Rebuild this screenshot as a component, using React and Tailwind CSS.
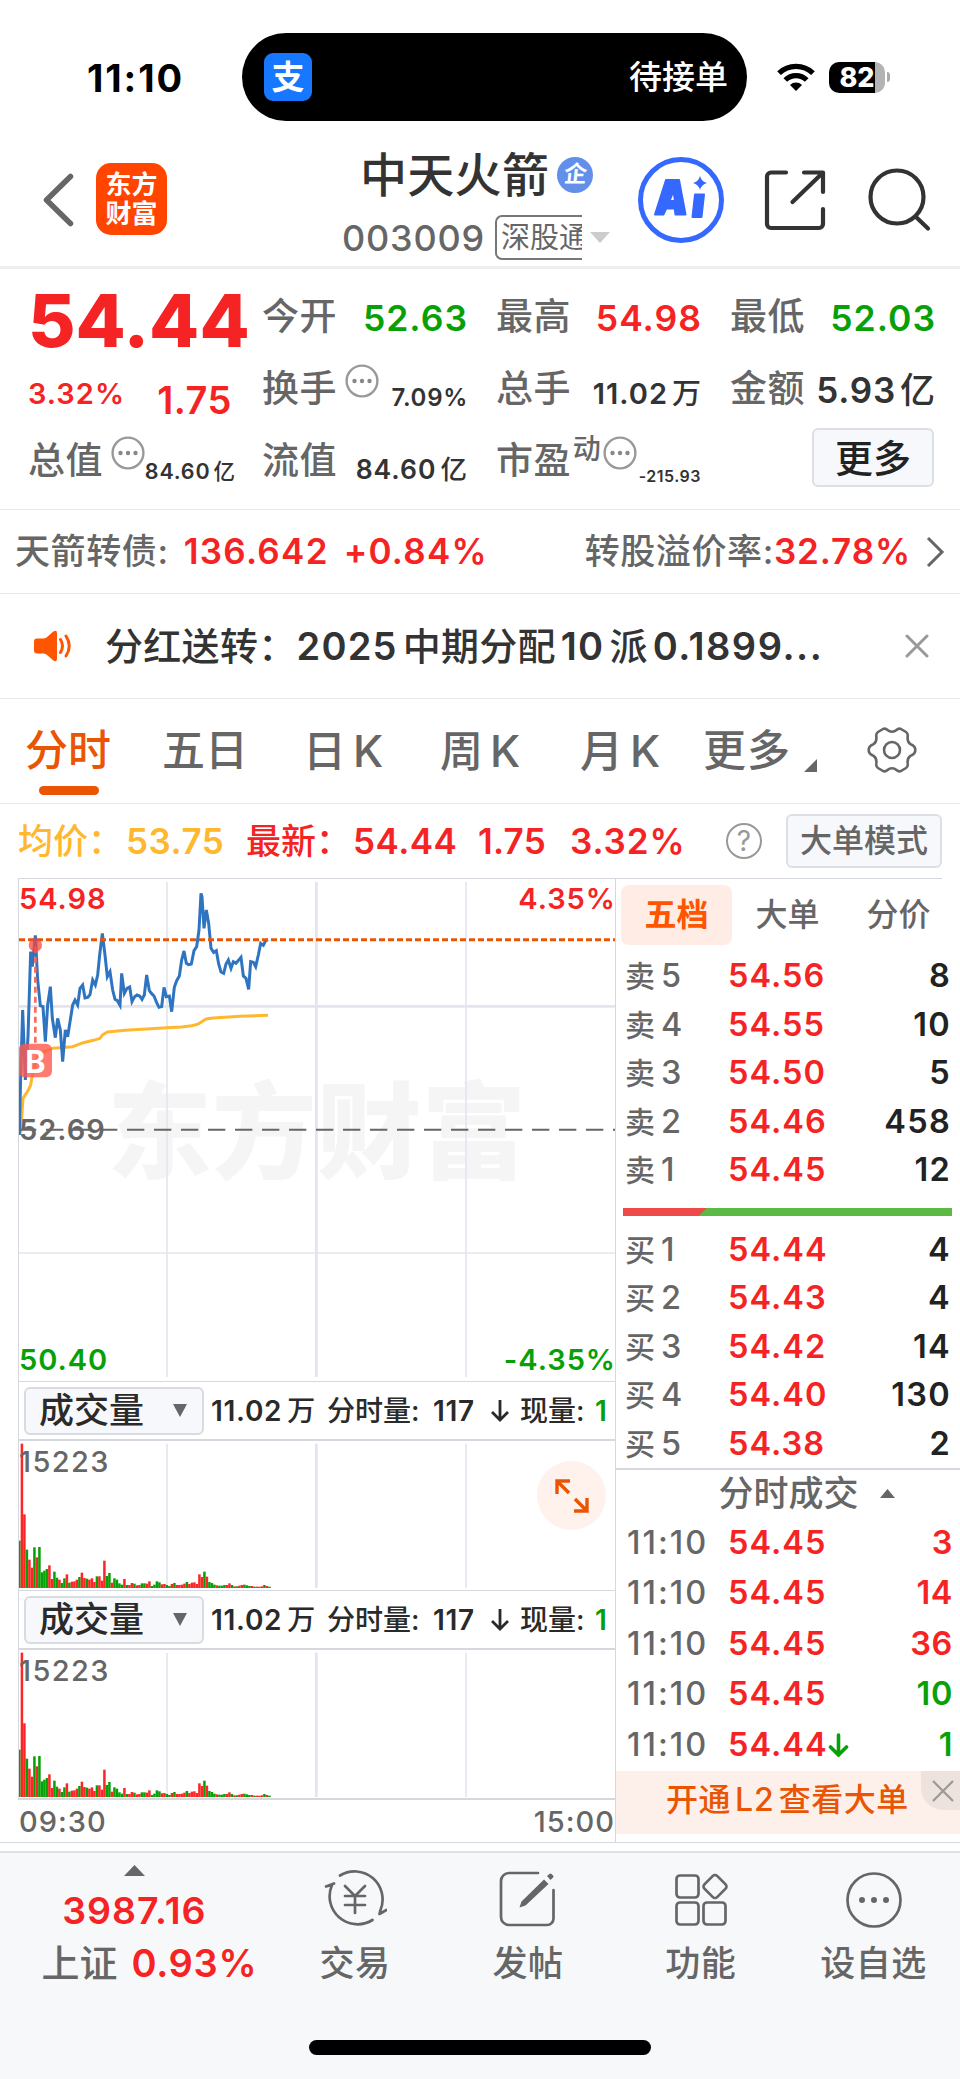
import clsx from "clsx";

const RED = "text-[#f52323]";
const GREEN = "text-[#07a007]";
const DARK = "text-[#333]";
const GRAY = "text-[#666]";

const asks = [
    { label: "卖5", price: "54.56", qty: "8" },
    { label: "卖4", price: "54.55", qty: "10" },
    { label: "卖3", price: "54.50", qty: "5" },
    { label: "卖2", price: "54.46", qty: "458" },
    { label: "卖1", price: "54.45", qty: "12" }
];

const bids = [
    { label: "买1", price: "54.44", qty: "4" },
    { label: "买2", price: "54.43", qty: "4" },
    { label: "买3", price: "54.42", qty: "14" },
    { label: "买4", price: "54.40", qty: "130" },
    { label: "买5", price: "54.38", qty: "2" }
];

const trades = [
    { price: "54.45", qty: "3", up: true },
    { price: "54.45", qty: "14", up: true },
    { price: "54.45", qty: "36", up: true },
    { price: "54.45", qty: "10", up: false },
    { price: "54.44", qty: "1", up: false, arrow: true }
];

// one bar per minute: r = up, g = down
const volumes = (
    "g142 r433 r221 g115 r85 r61 g122 r92 g123 g47 g52 g57 r68 r27 g49 g31 r25 g15 g29 r41 " +
    "g16 r19 r20 r25 g33 r46 r30 g28 r25 r29 r18 g35 r35 r22 r82 g36 g45 r16 g29 g25 " +
    "g14 g10 r27 g9 r9 r15 g13 r8 r9 g14 g14 r13 r20 g6 g10 g20 g17 r11 r12 g9 " +
    "g6 r12 g15 r9 r9 r10 r13 g18 r12 r16 r17 r12 r41 r33 g49 r34 g18 g15 g10 r8 " +
    "g7 g7 g9 r9 r14 g9 r5 g5 r7 r9 g10 g8 g6 r6 g4 r4 r4 r5 g9 r6 g4"
).split(" ").map((s) => ({ up: s[0] === "r", h: Number(s.slice(1)) }));

const priceLine =
    "58,795 62,620 68,420 76,630 84,500 92,245 97,290 106,196 113,330 121,407 129,410 136,515 143,405 151,350 " +
    "157,445 166,503 173,445 181,480 188,575 196,480 203,500 218,405 225,390 233,405 240,355 248,345 255,384 263,382 " +
    "270,374 278,330 286,345 293,315 299,255 307,190 315,255 322,320 330,305 338,360 345,388 352,392 360,406 365,310 373,370 " +
    "381,355 389,351 396,395 404,380 411,375 419,378 426,388 433,375 440,315 448,362 455,371 462,378 470,398 477,412 485,410 " +
    "492,352 499,380 508,378 515,425 523,352 530,332 538,318 545,270 552,243 559,280 566,284 574,282 582,242 590,230 " +
    "597,180 603,70 606,80 612,175 619,120 626,160 633,235 641,247 649,242 656,282 663,306 671,310 678,282 685,270 " +
    "693,295 700,275 708,280 723,262 730,318 738,325 746,358 752,275 760,277 767,290 775,255 782,220 790,226 797,212 804,209";

const avgLine =
    "62,790 69,685 85,660 92,645 98,610 106,580 113,560 125,548 158,535 218,530 250,518 280,511 300,505 307,495 " +
    "322,486 375,481 440,477 500,473 545,471 575,467 593,463 605,455 618,447 640,444 720,439 804,436";

function MoreDots({ className }) {
    return (
        <svg className={clsx("h-[34px] w-[34px] shrink-0", className)} viewBox="0 0 34 34" fill="none">
            <circle cx="17" cy="17" r="15.4" stroke="#999" strokeWidth="2.4" />
            <circle cx="9.5" cy="17" r="2.2" fill="#888" />
            <circle cx="17" cy="17" r="2.2" fill="#888" />
            <circle cx="24.5" cy="17" r="2.2" fill="#888" />
        </svg>
    );
}

function StatusBar() {
    return (
        <div className="flex h-[145px] items-start pt-[33px]">
            <div className="flex h-[88px] w-[242px] items-center pt-px pl-[87px] text-[38px] font-bold tracking-[1.9px] text-black">11:10</div>
            <div className="flex h-[88px] w-[505px] items-center justify-between rounded-full bg-black pr-[19px] pl-[22px]">
                <div className="flex h-12 w-12 items-center justify-center rounded-[9px] bg-[#1677ff]">
                    <span className="text-[33px] font-bold text-white">支</span>
                </div>
                <span className="text-[33px] font-medium text-white">待接单</span>
            </div>
            <div className="flex h-[88px] items-center pl-[30px]">
                <svg className="h-[28px] w-[38px]" viewBox="0 0 38 28" fill="none" stroke="#000" strokeWidth="5.2">
                    <path d="M2 10.2a24.5 24.5 0 0 1 34 0" />
                    <path d="M8.3 17a15.2 15.2 0 0 1 21.4 0" />
                    <path d="M13 22a8.5 8.5 0 0 1 12 0l-6 6z" fill="#000" stroke="none" />
                </svg>
                <div className="ml-[14px] flex h-[31px] w-[56px] items-center justify-center overflow-hidden rounded-[10px] bg-[linear-gradient(90deg,#000_46px,#b3b3b3_46px)]">
                    <span className="text-[27px] font-extrabold text-white">82</span>
                </div>
                <div className="ml-[2px] h-[10px] w-[3px] rounded-r-full bg-[#aaa]" />
            </div>
        </div>
    );
}

function Header() {
    return (
        <div className="flex h-[124px] border-b-[3px] border-[#eee]">
            <svg className="mt-[27px] ml-[42px] h-[56px] w-[34px]" viewBox="0 0 34 56" fill="none" stroke="#666" strokeWidth="5.5" strokeLinecap="round" strokeLinejoin="round">
                <path d="M28.5 4.5L4.5 28l24 23.5" />
            </svg>
            <div className="mt-[18px] ml-5 flex h-[72px] w-[71px] flex-col items-center justify-center gap-[3px] rounded-[15px] bg-[#ff4500] text-[26px] font-bold text-white">
                <span>东方</span>
                <span>财富</span>
            </div>
            <div className="ml-[175px] w-[274px]">
                <div className="mt-[6px] flex items-center pl-[18px]">
                    <span className="text-[47px] font-medium tracking-[0.3px] text-[#333]">中天火箭</span>
                    <div className="ml-2 flex h-9 w-9 items-center justify-center rounded-full bg-[#628fea] text-[23px] font-bold text-white">
                        <span className="-skew-x-6">企</span>
                    </div>
                </div>
                <div className="mt-[17px] flex items-center">
                    <span className="text-[36px] font-medium tracking-[0.8px] text-[#666]">003009</span>
                    <div className="ml-[10px] flex h-[45px] w-[87px] items-center overflow-hidden rounded-l-[7px] border-2 border-r-0 border-[#777] pl-1 text-[29px] whitespace-nowrap text-[#666]">
                        深股通
                    </div>
                    <svg className="ml-2 h-[11px] w-5" viewBox="0 0 20 11">
                        <path d="M0 0h20L10 11z" fill="#ccc" />
                    </svg>
                </div>
            </div>
            <svg className="mt-[11px] ml-[22px] h-[88px] w-[88px]" viewBox="0 0 88 88" fill="none">
                <circle cx="43" cy="44" r="40.5" stroke="#3568ff" strokeWidth="5" />
                <path d="M28 24h13l6.500 34.500h-10l-.8-6h-8.500l-2.800 6H17zM35.500 35l-4 10h5.500z" fill="#3568ff" stroke="#3568ff" strokeWidth="2" strokeLinejoin="round" fillRule="evenodd" />
                <path d="M57 38.500h9l-2.500 22.500h-9z" fill="#3568ff" stroke="#3568ff" strokeWidth="2" strokeLinejoin="round" />
                <path d="M62 20q1.500 5.500 7 7-5.500 1.500-7 7-1.500-5.500-7-7 5.500-1.500 7-7z" fill="#3568ff" />
            </svg>
            <svg className="mt-[23px] ml-[37px] h-[64px] w-[64px]" viewBox="0 0 64 64" fill="none" stroke="#333" strokeWidth="4.2" strokeLinecap="round" strokeLinejoin="round">
                <path d="M23 4.5H8a4 4 0 0 0-4 4V56a4 4 0 0 0 4 4h48a4 4 0 0 0 4-4V41" />
                <path d="M41 4.5h19V24M59 5.5L29.500 34" />
            </svg>
            <svg className="mt-[21px] ml-[39px] h-[68px] w-[68px]" viewBox="0 0 68 68" fill="none" stroke="#333" strokeWidth="4.2" strokeLinecap="round">
                <circle cx="31" cy="31" r="26.500" />
                <path d="M50 51l12 11.500" />
            </svg>
        </div>
    );
}

function Label({ children }) {
    return <span className="mt-[17px] shrink-0 text-[37px] tracking-[0.4px] text-[#666]">{children}</span>;
}

function Quote() {
    return (
        <div className="grid h-[241px] grid-cols-[204px_204px_204px_204px] grid-rows-[72px_72px_72px] gap-x-[30px] border-b border-[#e8e8e8] px-7 pt-[12px] font-medium whitespace-nowrap">
            <div className={clsx("mt-[3px] text-[73px] font-extrabold", RED)}>54.44</div>
            <div className="flex justify-between">
                <Label>今开</Label>
                <span className={clsx("mt-5 -mr-[2px] text-[35.5px] font-[560] tracking-[1px]", GREEN)}>52.63</span>
            </div>
            <div className="flex justify-between">
                <Label>最高</Label>
                <span className={clsx("mt-5 -mr-[2px] text-[35.5px] font-[560] tracking-[1px]", RED)}>54.98</span>
            </div>
            <div className="flex justify-between">
                <Label>最低</Label>
                <span className={clsx("mt-5 -mr-[2px] text-[35.5px] font-[560] tracking-[1px]", GREEN)}>52.03</span>
            </div>

            <div className={clsx("flex justify-between font-[560]", RED)}>
                <span className="mt-[26px] text-[29px] tracking-[1px]">3.32%</span>
                <span className="mt-[28px] text-[38px] tracking-[0.5px]">1.75</span>
            </div>
            <div className="flex justify-between">
                <div className="flex">
                    <Label>换手</Label>
                    <MoreDots className="mt-[11px] ml-[8px]" />
                </div>
                <span className={clsx("mt-[33px] -mr-[2px] text-[24px] font-[560] tracking-[0.7px]", DARK)}>7.09%</span>
            </div>
            <div className="flex justify-between">
                <Label>总手</Label>
                <span className={clsx("mt-[26px] -mr-px text-[29px]", DARK)}>
                    <span className="mr-1 font-[560] tracking-[1px]">11.02</span>万
                </span>
            </div>
            <div className="flex justify-between">
                <Label>金额</Label>
                <span className={clsx("mt-5 -mr-px text-[35px]", DARK)}>
                    <span className="mr-1 font-[560] tracking-[0.8px]">5.93</span>亿
                </span>
            </div>

            <div className="flex justify-between">
                <div className="flex">
                    <Label>总值</Label>
                    <MoreDots className="mt-[11px] ml-[8px]" />
                </div>
                <span className={clsx("mt-[36px] -mr-px text-[21.5px]", DARK)}>
                    <span className="mr-[3px] font-[560] tracking-[0.8px]">84.60</span>亿
                </span>
            </div>
            <div className="flex justify-between">
                <Label>流值</Label>
                <span className={clsx("mt-[31px] -mr-px text-[26.5px]", DARK)}>
                    <span className="mr-[4px] font-[560] tracking-[1px]">84.60</span>亿
                </span>
            </div>
            <div className="flex justify-between">
                <div className="flex">
                    <Label>市盈</Label>
                    <span className="mt-[10px] ml-[2px] text-[28px] text-[#666]">动</span>
                    <MoreDots className="mt-[11px] ml-[2px]" />
                </div>
                <span className={clsx("mt-[43px] -mr-px text-[16px] font-[560] tracking-[0.5px]", DARK)}>-215.93</span>
            </div>
            <div className="flex justify-end">
                <div className="mt-[3px] flex h-[59px] w-[122px] items-center justify-center rounded-[6px] border-2 border-[#dcdfe6] bg-[#f7f8fb] text-[38px] text-[#222]">
                    更多
                </div>
            </div>
        </div>
    );
}

function BondRow() {
    return (
        <div className="flex h-[84px] items-center border-b border-[#e8e8e8] pr-[15px] pl-[15px] text-[35px] font-medium whitespace-nowrap">
            <span className="tracking-[0.6px] text-[#666]">天箭转债:</span>
            <span className={clsx("ml-[15px] font-[560] tracking-[1.3px]", RED)}>136.642</span>
            <span className={clsx("ml-[15px] font-[560] tracking-[1.2px]", RED)}>+0.84%</span>
            <span className="ml-auto tracking-[0.6px] text-[#666]">转股溢价率:</span>
            <span className={clsx("font-[560] tracking-[0.9px]", RED)}>32.78%</span>
            <svg className="ml-[14px] h-[32px] w-[20px]" viewBox="0 0 20 32" fill="none" stroke="#666" strokeWidth="3">
                <path d="M3 2l14 14L3 30" />
            </svg>
        </div>
    );
}

function Notice() {
    return (
        <div className="flex h-[105px] items-center border-b border-[#e8e8e8] pl-[33px] font-medium whitespace-nowrap">
            <svg className="h-[32px] w-[40px]" viewBox="0 0 40 32" fill="none">
                <path d="M1 11.5q0-3 3-3h6q2 0 3.500-1L20 1.800q4-2.600 4 1.400v25.600q0 4-4 1.400l-6.500-5.700q-1.500-1-3.500-1H4q-3 0-3-3z" fill="#ff5500" />
                <path d="M27.500 9.500q4 6.500 0 13M33 6q6.500 10 0 20" stroke="#ff5500" strokeWidth="3" strokeLinecap="round" />
            </svg>
            <span className="ml-[32px] w-[721px] text-[38px] tracking-[0.3px] text-[#333]">
                分红送转：<span className="font-[560] tracking-[1.2px]">2025</span>
                <span className="mx-[5px]">中期分配</span>
                <span className="font-[560] tracking-[1.2px]">10</span>
                <span className="mx-[5px]">派</span>
                <span className="font-[560] tracking-[1.5px]">0.1899...</span>
            </span>
            <svg className="ml-[79px] h-[24px] w-[24px]" viewBox="0 0 24 24" stroke="#999" strokeWidth="3" strokeLinecap="round">
                <path d="M2 2l20 20M22 2L2 22" />
            </svg>
        </div>
    );
}

function Tabs() {
    return (
        <div className="flex h-[105px] border-b border-[#e8e8e8] pl-[25px] text-[43px] font-medium whitespace-nowrap text-[#666]">
            <div className="flex w-[137px] flex-col pt-[30px] text-[#ea5504]">
                分时
                <div className="mt-[14px] ml-[14px] h-[9px] w-[60px] rounded-full bg-[#ea5504]" />
            </div>
            <span className="w-[141px] pt-[30px]">五日</span>
            <span className="w-[137px] pt-[30px]">日<span className="ml-[7px] text-[44px]">K</span></span>
            <span className="w-[140px] pt-[30px]">周<span className="ml-[7px] text-[44px]">K</span></span>
            <span className="w-[123px] pt-[30px]">月<span className="ml-[7px] text-[44px]">K</span></span>
            <span className="w-[86px] pt-[30px] tracking-[1px]">更多</span>
            <svg className="mt-[60px] ml-[15px] h-[13px] w-[13px]" viewBox="0 0 13 13">
                <path d="M13 0v13H0z" fill="#666" />
            </svg>
            <svg className="mt-[26px] ml-[50px] h-[50px] w-[50px]" viewBox="0 0 50 50" fill="none" stroke="#666" strokeWidth="2.6" strokeLinejoin="round">
                <path d="M25 6.800Q27.500 6.800 29.500 5 31.500 3 34 4L39 7Q41.200 8.500 40.700 11.500 40 17 43.500 19.200L46 20.500Q48.300 22 48.300 25 48.300 28 46 29.500L43.500 30.800Q40 33 40.700 38.500 41.200 41.500 39 43L34 46Q31.500 47 29.500 45 27.500 43.200 25 43.200 22.500 43.200 20.500 45 18.500 47 16 46L11 43Q8.800 41.500 9.300 38.500 10 33 6.500 30.800L4 29.500Q1.700 28 1.700 25 1.700 22 4 20.500L6.500 19.200Q10 17 9.300 11.500 8.800 8.500 11 7L16 4Q18.500 3 20.500 5 22.500 6.800 25 6.800z" />
                <circle cx="25" cy="25" r="8" />
            </svg>
        </div>
    );
}

function AvgRow() {
    return (
        <div className="flex h-[74px] items-center pl-[18px] text-[35px] font-medium whitespace-nowrap">
            <span className="w-[108px] text-[#ffb72e]">均价：</span>
            <span className="w-[120px] font-[560] tracking-[0.5px] text-[#ffb72e]">53.75</span>
            <span className={clsx("w-[107px]", RED)}>最新：</span>
            <span className={clsx("w-[125px] font-[560] tracking-[0.5px]", RED)}>54.44</span>
            <span className={clsx("w-[92px] font-[560] tracking-[0.2px]", RED)}>1.75</span>
            <span className={clsx("w-[156px] font-[560] tracking-[0.9px]", RED)}>3.32%</span>
            <div className="flex h-9 w-9 items-center justify-center rounded-full border-2 border-[#999] text-[28px] font-normal text-[#999]">?</div>
            <div className="ml-[24px] flex h-[54px] w-[156px] items-center justify-center rounded-[6px] border-2 border-[#dcdfe6] bg-[#f7f8fb] text-[32px] text-[#666]">
                大单模式
            </div>
        </div>
    );
}

function PriceChart() {
    return (
        <div className="grid h-[503px] border-t border-l border-[#d5d8de]">
            <svg className="col-start-1 row-start-1 h-[502px] w-[597px]" viewBox="57 27 1791 1506" fill="none">
                <text x="322" y="900" fontSize="313" fontWeight="900" fill="#f5f5f6" textLength="1256">东方财富</text>
                <path d="M501 36V1521M949 36V1521M1398 36V1521" stroke="#e3e6ee" strokeWidth="5" />
                <path d="M949 36V1521M57 409H1848" stroke="#e3e4ef" strokeWidth="8" />
                <path d="M57 1149H1848" stroke="#e3e6ee" strokeWidth="4" />
                <polyline points={avgLine} stroke="#ffb72e" strokeWidth="9" strokeLinejoin="round" />
                <polyline points={priceLine} stroke="#2f74c0" strokeWidth="9" />
                <path d="M57 209H1848" stroke="#ea5504" strokeWidth="9" strokeDasharray="18 9" />
                <path d="M57 779H1848" stroke="#666" strokeWidth="6" strokeDasharray="52 29" />
                <path d="M106 230V520" stroke="#fb6a5c" strokeWidth="8" strokeDasharray="18 12" />
                <circle cx="106" cy="225" r="20" fill="#f5463c" fillOpacity=".75" />
                <rect x="56" y="521" width="100" height="101" rx="18" fill="#ff5a4d" fillOpacity=".8" />
                <text x="106" y="608" fontSize="92" fontWeight="700" fill="#fff" textAnchor="middle">B</text>
            </svg>
            <div className="z-10 col-start-1 row-start-1 flex flex-col justify-between pt-[5px] pb-[7px] text-[29px] font-[560] tracking-[1px]">
                <div className={clsx("flex justify-between", RED)}>
                    <span>54.98</span>
                    <span>4.35%</span>
                </div>
                <div className={GRAY}>52.69</div>
                <div className={clsx("flex justify-between", GREEN)}>
                    <span>50.40</span>
                    <span>-4.35%</span>
                </div>
            </div>
        </div>
    );
}

function VolumeBars() {
    return (
        <svg className="col-start-1 row-start-1 h-[149px] w-[597px]" viewBox="57 30 1791 447">
            <path d="M501 38V471M1398 38V471" stroke="#e3e6ee" strokeWidth="5" />
            <path d="M949 38V471" stroke="#e3e4ef" strokeWidth="8" />
            {volumes.map((v, i) => (
                <rect
                    key={i}
                    x={i === 0 ? 57 : 54.5 + i * 7.5}
                    y={471 - v.h}
                    width={i === 0 ? 5 : 7.5}
                    height={v.h}
                    fill={v.up ? "#fb2626" : "#07a007"}
                />
            ))}
        </svg>
    );
}

function VolumePanel({ expandable, last }) {
    return (
        <div className="border-l border-[#d5d8de]">
            <div className="flex h-[58px] items-center overflow-hidden border-t border-[#d5d8de] pl-[5px] text-[28px] font-medium whitespace-nowrap text-[#2a2a2a]">
                <div className="flex h-[48px] w-[180px] shrink-0 items-center justify-between rounded-[6px] border-2 border-[#d8dbe2] bg-[#f7f8fb] pr-[15px] pl-[13px] text-[35px]">
                    成交量
                    <svg className="h-[13px] w-[14px]" viewBox="0 0 14 13">
                        <path d="M0 0h14L7 13z" fill="#666" />
                    </svg>
                </div>
                <span className="ml-[7px] w-[116px]">
                    <span className="mr-[5px] font-[560] tracking-[0.7px]">11.02</span>万
                </span>
                <span className="w-[106px]">分时量:</span>
                <span className="w-[58px] font-[560] tracking-[0.7px]">117</span>
                <svg className="mr-[11px] h-[22px] w-[18px]" viewBox="0 0 18 22" fill="none" stroke="#2a2a2a" strokeWidth="2.8">
                    <path d="M9 0v20M1 12l8 8 8-8" />
                </svg>
                <span className="w-[75px]">现量:</span>
                <span className={clsx("font-[560]", GREEN)}>1</span>
            </div>
            <div className={clsx("grid border-t-2 border-[#d5d8de]", last ? "h-[152px] border-b-2" : "h-[151px]")}>
                <VolumeBars />
                <span className="z-10 col-start-1 row-start-1 pt-[6px] text-[29px] font-medium tracking-[1.4px] text-[#666]">15223</span>
                {expandable && (
                    <div className="z-10 col-start-1 row-start-1 mt-[20px] mr-[10px] flex h-[69px] w-[69px] items-center justify-center justify-self-end rounded-full bg-[#fff1eb]">
                        <svg className="h-[36px] w-[36px]" viewBox="0 0 36 36" fill="none" stroke="#ea5504" strokeWidth="3.4">
                            <path d="M3 16V3h13M3.500 3.500L15 15M33 20v13H20M32.500 32.500L21 21" />
                        </svg>
                    </div>
                )}
            </div>
        </div>
    );
}

function BookRow({ row }) {
    return (
        <div className="flex h-[48.5px] items-center pr-[9px] pl-[9px] text-[32.5px] font-medium">
            <span className="w-[103px] text-[#666]">
                <span className="text-[30px]">{row.label[0]}</span>
                <span className="ml-[6px]">{row.label[1]}</span>
            </span>
            <span className={clsx("font-[560] tracking-[1px]", RED)}>{row.price}</span>
            <span className="ml-auto font-[560] tracking-[1.3px] text-[#222]">{row.qty}</span>
        </div>
    );
}

function OrderBook() {
    return (
        <div className="flex w-[345px] flex-col border-l border-[#d5d8de] whitespace-nowrap">
            <div className="mr-[18px] flex h-[74px] border-t border-[#d5d8de] pt-[6px] pl-[5px] text-[32px] font-medium text-[#666]">
                <div className="flex h-[60px] w-[111px] shrink-0 items-center justify-center rounded-[8px] bg-[#ffece4] font-bold text-[#ff5500]">五档</div>
                <div className="flex h-[60px] w-[111px] shrink-0 items-center justify-center">大单</div>
                <div className="flex h-[60px] w-[111px] shrink-0 items-center justify-center">分价</div>
            </div>
            {asks.map((row) => (
                <BookRow key={row.label} row={row} />
            ))}
            <div className="mt-[13px] mr-2 ml-[7px] h-[8px] shrink-0 bg-[linear-gradient(135deg,#ef4a4a_59px,#5bb944_59.5px)]" />
            <div className="mt-[10px] h-[242px]">
                {bids.map((row) => (
                    <BookRow key={row.label} row={row} />
                ))}
            </div>
            <div className="flex h-[50px] items-center justify-center border-t-2 border-[#d5d8de] pl-[37px] text-[35px] font-medium text-[#666]">
                <span>分时成交</span>
                <svg className="ml-[21px] h-[9px] w-[15px]" viewBox="0 0 15 9">
                    <path d="M0 9h15L7.500 0z" fill="#666" />
                </svg>
            </div>
            {trades.map((trade, i) => (
                <div key={i} className="flex h-[50.5px] items-center pr-[7px] pl-[11px] text-[32.5px] font-medium">
                    <span className="w-[101px] tracking-[2px] text-[#666]">11:10</span>
                    <span className={clsx("font-[560] tracking-[1px]", RED)}>{trade.price}</span>
                    {trade.arrow && (
                        <svg className="h-[24px] w-[21px]" viewBox="0 0 21 24" fill="none" stroke="#07a007" strokeWidth="3.6" strokeLinecap="round">
                            <path d="M10.500 2v19M2.500 14l8 8 8-8" />
                        </svg>
                    )}
                    <span className={clsx("ml-auto font-[560] tracking-[0.6px]", trade.up ? RED : GREEN)}>{trade.qty}</span>
                </div>
            ))}
            <div className="mt-auto mb-2 flex h-[63px] bg-[#fdf0ea]">
                <span className="w-[305px] pt-[13px] pl-[50px] text-[32px] font-medium tracking-[0.5px] text-[#ea5504]">
                    开通<span className="mx-[4px] tracking-[1px]">L2</span>查看大单
                </span>
                <div className="flex h-[39px] flex-1 items-center justify-center rounded-bl-[22px] bg-[#ede2dc] pl-[5px]">
                    <svg className="h-[22px] w-[22px]" viewBox="0 0 22 22" stroke="#999" strokeWidth="2.2">
                        <path d="M1 1l20 20M21 1L1 21" />
                    </svg>
                </div>
            </div>
        </div>
    );
}

const actions = [
    {
        label: "交易",
        icon: (
            <>
                <path d="M17 7.500A28 28 0 0 1 57.500 42l-1 4 7-4M49.500 52A28 28 0 0 1 9 17l-6 1.500 8-3" />
                <path d="M22 18l10 10 10-10M22 28h20M22 37h20M32 28v17" />
            </>
        )
    },
    {
        label: "发帖",
        icon: (
            <>
                <path d="M42 5H13a8 8 0 0 0-8 8v36a8 8 0 0 0 8 8h38a6.500 6.500 0 0 0 6.500-6.500V22" />
                <path d="M23.500 39.500l2-6L48 11.500l4.500 4.500-23 21.500zM51 8l3-2.500q3.500 1 3.500 3.500l-3 3z" fill="#666" stroke="none" />
            </>
        )
    },
    {
        label: "功能",
        icon: (
            <>
                <rect x="7.500" y="7.500" width="22" height="22" rx="3.500" />
                <rect x="7.500" y="34.500" width="22" height="22" rx="3.500" />
                <rect x="34.500" y="34.500" width="22" height="22" rx="3.500" />
                <rect x="37" y="9.500" width="18" height="18" rx="3" transform="rotate(45 46 18.500)" />
            </>
        )
    },
    {
        label: "设自选",
        icon: (
            <>
                <circle cx="32" cy="32" r="26.500" />
                <path d="M17 32a3 3 0 1 0 6 0 3 3 0 1 0-6 0zM29 32a3 3 0 1 0 6 0 3 3 0 1 0-6 0zM41 32a3 3 0 1 0 6 0 3 3 0 1 0-6 0z" fill="#666" stroke="none" />
            </>
        )
    }
];

function BottomBar() {
    return (
        <div className="flex h-[228px] flex-col items-center border-t-2 border-[#dfe2e5] bg-[#f7f8fa]">
            <div className="flex w-full text-[35px] font-medium whitespace-nowrap text-[#666]">
                <div className="flex w-[269px] flex-col items-center pt-[12px]">
                    <svg className="h-[11px] w-[21px]" viewBox="0 0 21 11">
                        <path d="M0 11h21L10.500 0z" fill="#666" />
                    </svg>
                    <span className={clsx("mt-[16px] text-[37.5px] font-[560] tracking-[1px]", RED)}>3987.16</span>
                    <div className="mt-[14px] ml-[30px] text-[38px]">
                        上证<span className={clsx("ml-[14px] font-[560] tracking-[0.7px]", RED)}>0.93%</span>
                    </div>
                </div>
                {actions.map((action) => (
                    <div key={action.label} className="flex w-[173px] flex-col items-center pt-[15px]">
                        <svg className="h-[64px] w-[64px]" viewBox="0 0 64 64" fill="none" stroke="#666" strokeWidth="2.7" strokeLinecap="round" strokeLinejoin="round">
                            {action.icon}
                        </svg>
                        <span className="mt-[14px] tracking-[0.5px]">{action.label}</span>
                    </div>
                ))}
            </div>
            <div className="mt-auto mb-6 h-[15px] w-[342px] rounded-full bg-black" />
        </div>
    );
}

export default function App() {
    return (
        <div className="h-[2079px] w-[960px] overflow-hidden bg-white font-['Inter','Noto_Sans_CJK_SC',sans-serif] leading-none">
            <StatusBar />
            <Header />
            <Quote />
            <BondRow />
            <Notice />
            <Tabs />
            <AvgRow />
            <div className="flex h-[965px] border-b border-[#d5d8de]">
                <div className="flex w-[615px] flex-col pl-[18px]">
                    <PriceChart />
                    <VolumePanel expandable />
                    <VolumePanel last />
                    <div className="flex flex-1 items-center justify-between pl-px text-[29px] font-medium tracking-[1px] text-[#666]">
                        <span>09:30</span>
                        <span>15:00</span>
                    </div>
                </div>
                <OrderBook />
            </div>
            <div className="h-[8px]" />
            <BottomBar />
        </div>
    );
}
